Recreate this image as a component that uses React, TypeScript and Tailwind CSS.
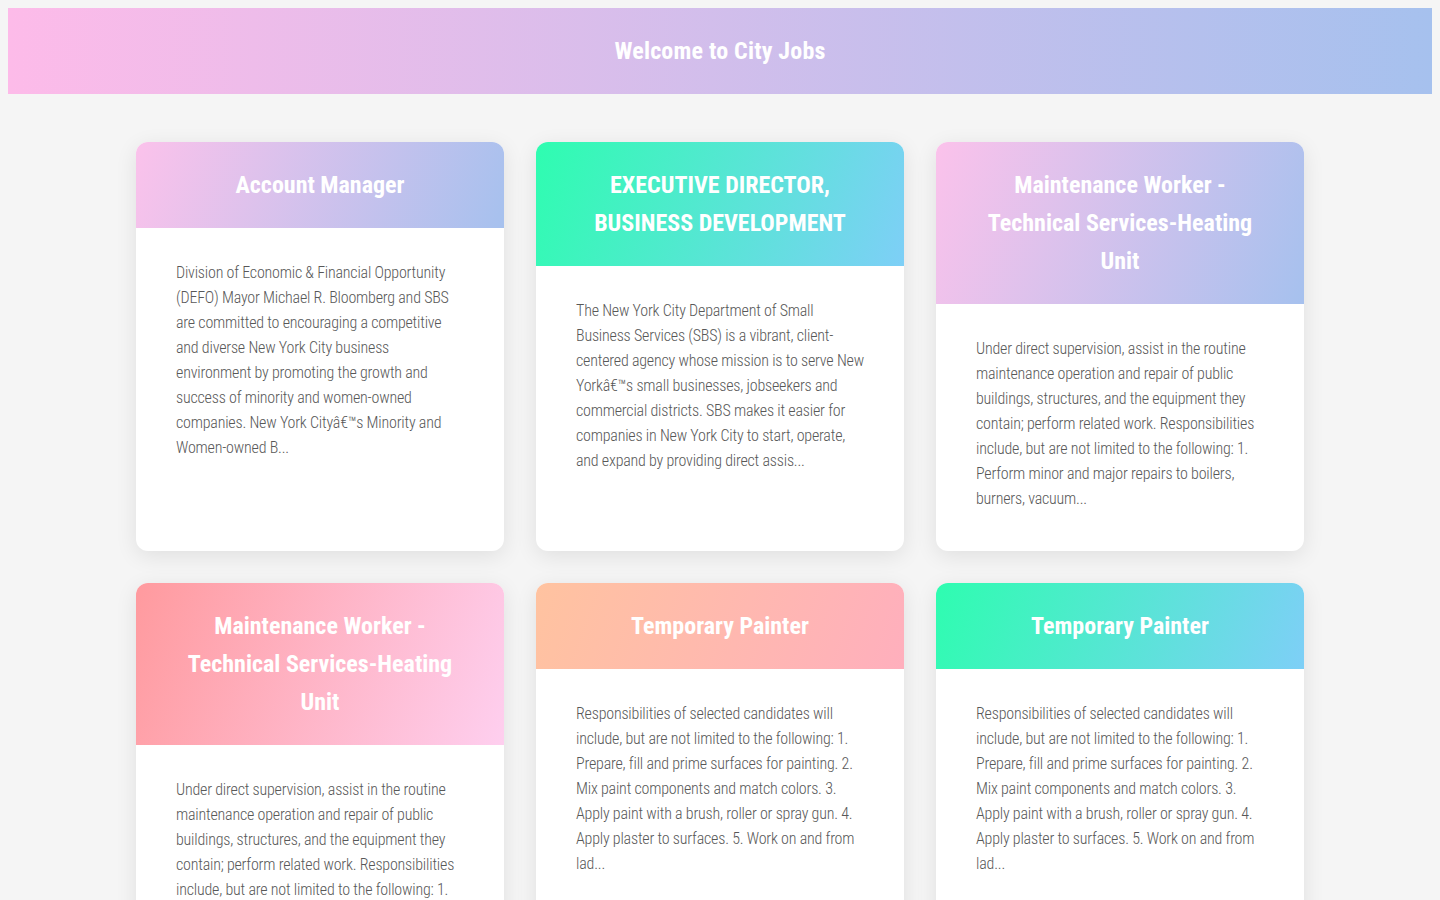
type Job = {
  title: string
  description: string
  gradient: string
}

const jobs: Job[] = [
  {
    title: "Account Manager",
    description:
      "Division of Economic & Financial Opportunity (DEFO) Mayor Michael R. Bloomberg and SBS are committed to encouraging a competitive and diverse New York City business environment by promoting the growth and success of minority and women-owned companies. New York Cityâ€™s Minority and Women-owned B...",
    gradient: "bg-[linear-gradient(110deg,#fbc2eb,#a6c1ee)]",
  },
  {
    title: "EXECUTIVE DIRECTOR, BUSINESS DEVELOPMENT",
    description:
      "The New York City Department of Small Business Services (SBS) is a vibrant, client-centered agency whose mission is to serve New Yorkâ€™s small businesses, jobseekers and commercial districts. SBS makes it easier for companies in New York City to start, operate, and expand by providing direct assis...",
    gradient: "bg-[linear-gradient(110deg,#2efdb0,#7ecff7)]",
  },
  {
    title: "Maintenance Worker - Technical Services-Heating Unit",
    description:
      "Under direct supervision, assist in the routine maintenance operation and repair of public buildings, structures, and the equipment they contain; perform related work. Responsibilities include, but are not limited to the following: 1. Perform minor and major repairs to boilers, burners, vacuum...",
    gradient: "bg-[linear-gradient(110deg,#fbc2eb,#a6c1ee)]",
  },
  {
    title: "Maintenance Worker - Technical Services-Heating Unit",
    description:
      "Under direct supervision, assist in the routine maintenance operation and repair of public buildings, structures, and the equipment they contain; perform related work. Responsibilities include, but are not limited to the following: 1. Perform minor and major repairs to boilers, burners, vacuum...",
    gradient: "bg-[linear-gradient(110deg,#ff9a9e,#fecfef)]",
  },
  {
    title: "Temporary Painter",
    description:
      "Responsibilities of selected candidates will include, but are not limited to the following: 1. Prepare, fill and prime surfaces for painting. 2. Mix paint components and match colors. 3. Apply paint with a brush, roller or spray gun. 4. Apply plaster to surfaces. 5. Work on and from lad...",
    gradient: "bg-[linear-gradient(110deg,#ffc3a0,#ffafbd)]",
  },
  {
    title: "Temporary Painter",
    description:
      "Responsibilities of selected candidates will include, but are not limited to the following: 1. Prepare, fill and prime surfaces for painting. 2. Mix paint components and match colors. 3. Apply paint with a brush, roller or spray gun. 4. Apply plaster to surfaces. 5. Work on and from lad...",
    gradient: "bg-[linear-gradient(110deg,#2efdb0,#7ecff7)]",
  },
]

function JobCard({ job }: { job: Job }) {
  return (
    <div className="bg-white rounded-xl overflow-hidden shadow-[0_5px_22px_rgba(0,0,0,0.09)]">
      <div className={`${job.gradient} px-10 py-6`}>
        <h2 className="text-white text-center text-[24px] leading-[38px] font-bold">{job.title}</h2>
      </div>
      <div className="px-10 pt-8 pb-10">
        <p className="text-[#585858] text-[16px] leading-[25px] font-light tracking-[-0.2px]">{job.description}</p>
      </div>
    </div>
  )
}

export default function App() {
  return (
    <div className="min-h-screen bg-[#f5f5f5] p-2 font-[Roboto,sans-serif] [font-stretch:75%]">
      {/* Banner */}
      <header className="h-[86px] flex items-center justify-center bg-[linear-gradient(to_right,#fdbbe9,#a6c1ee)]">
        <h1 className="text-white text-[24px] font-bold tracking-[0.2px]">Welcome to City Jobs</h1>
      </header>

      {/* Job listings */}
      <main className="mx-auto w-[1168px] mt-12 grid grid-cols-3 gap-8">
        {jobs.map((job, i) => (
          <JobCard key={i} job={job} />
        ))}
      </main>
    </div>
  )
}
